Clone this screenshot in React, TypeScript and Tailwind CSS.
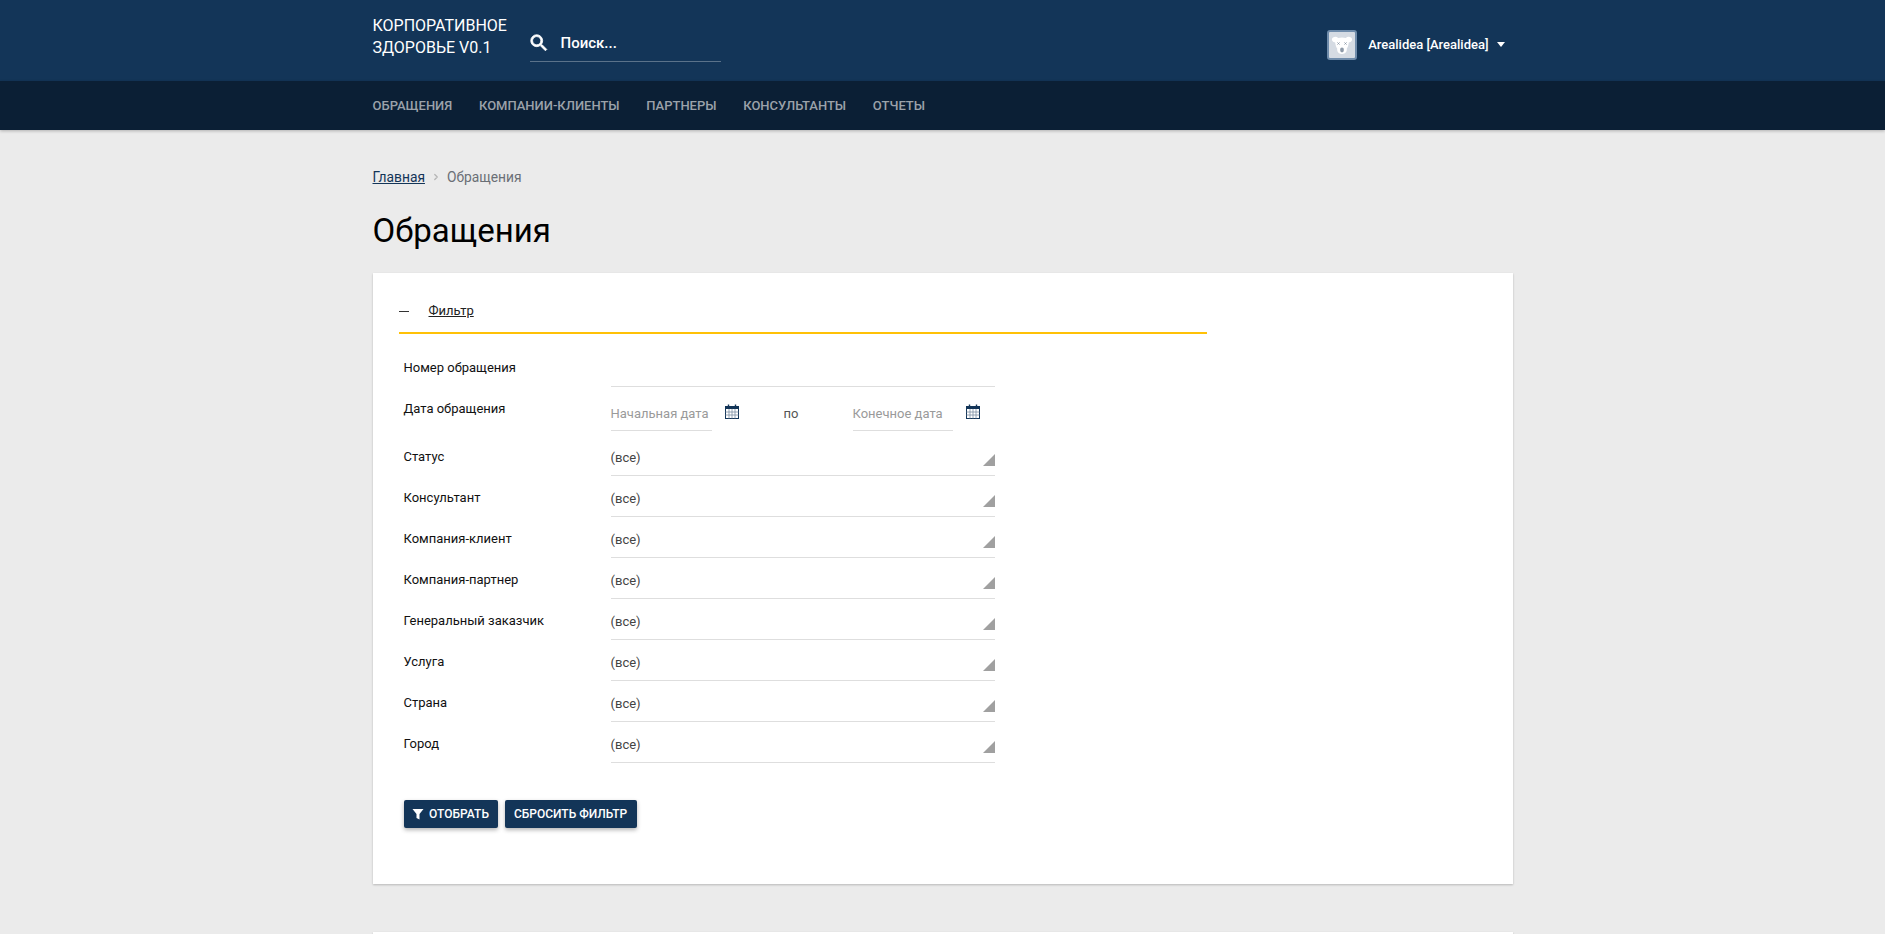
import { ChevronRight } from "lucide-react"

const navItems = ["Обращения", "Компании-клиенты", "Партнеры", "Консультанты", "Отчеты"]
const selects = ["Статус", "Консультант", "Компания-клиент", "Компания-партнер", "Генеральный заказчик", "Услуга", "Страна", "Город"]

function SearchIcon() {
  return (
    <svg viewBox="0 0 24 24" className="-ml-[2px] h-[22px] w-[22px] fill-white stroke-white stroke-[0.9]">
      <path d="M15.5 14h-.79l-.28-.27A6.471 6.471 0 0 0 16 9.5 6.5 6.5 0 1 0 9.5 16c1.61 0 3.09-.59 4.23-1.57l.27.28v.79l5 4.99L20.49 19l-4.99-5zm-6 0C7.01 14 5 11.99 5 9.5S7.01 5 9.5 5 14 7.01 14 9.5 11.99 14 9.5 14z" />
    </svg>
  )
}

function DogAvatar() {
  return (
    <div className="flex h-[30px] w-[30px] items-center justify-center rounded-[3px] border-2 border-[#6f8cab] bg-[#d5dbe3]">
      <svg viewBox="0 0 26 26" className="h-[26px] w-[26px]">
        <path
          fill="#fff"
          d="M4 5.5c1.8-1 3.8-.8 5.2.4 2.4-.7 5.2-.7 7.6 0 1.4-1.2 3.4-1.4 5.2-.4 1.2.7 1.4 2.3.6 3.5-.6.9-1.6 1.4-2.8 1.4-.2 2.4-1 4.6-2 6.2.3 3-1.1 5.4-4.8 5.4s-5.1-2.4-4.8-5.4c-1-1.6-1.8-3.8-2-6.2-1.2 0-2.2-.5-2.8-1.4-.8-1.2-.6-2.8.6-3.5z"
        />
        <path stroke="#8d99a8" strokeWidth="1" d="M8.5 10.5l2 2m0-2l-2 2M15.5 10.5l2 2m0-2l-2 2" />
        <ellipse cx="13" cy="18" rx="1.9" ry="2.4" fill="#8d99a8" />
      </svg>
    </div>
  )
}

function CalendarIcon() {
  return (
    <svg viewBox="0 0 14 15" className="h-[15px] w-[14px] shrink-0">
      <rect x="0.5" y="2.5" width="13" height="12" fill="#fff" stroke="#133558" />
      <rect x="0" y="2" width="14" height="3" fill="#133558" />
      <path stroke="#7f8fa3" strokeWidth="0.8" d="M0.5 8h13M0.5 11h13M4 5v9.5M7 5v9.5M10 5v9.5" />
      <path stroke="#133558" strokeWidth="1.4" d="M3.5 0.5v3M10.5 0.5v3" />
    </svg>
  )
}

function Corner() {
  return (
    <svg viewBox="0 0 12 12" className="h-3 w-3 fill-[#a0a0a0]">
      <path d="M12 0v12H0z" />
    </svg>
  )
}

function SelectRow({ label, tall }: { label: string; tall?: boolean }) {
  return (
    <div className={`flex ${tall ? "h-[45px]" : "h-[41px]"}`}>
      <div className="flex w-[207px] items-end pb-[12px] text-[13px] leading-[15px] text-[#111]">{label}</div>
      <div className="flex w-[384px] items-end justify-between border-b border-[#dedede] pb-[9px]">
        <span className="pb-[1px] text-[13px] leading-[15px] text-[#444]">(все)</span>
        <Corner />
      </div>
    </div>
  )
}

export default function App() {
  return (
    <div className="h-[934px] overflow-hidden bg-[#ebebeb] font-['Roboto',sans-serif]">
      <header className="bg-[#133558]">
        <div className="mx-auto flex h-[81px] w-[1140px] items-center">
          <div className="mb-[7px] w-[157px] text-[16px] font-normal leading-[22px] text-white">
            КОРПОРАТИВНОЕ
            <br />
            ЗДОРОВЬЕ V0.1
          </div>
          <div className="mt-[7px] flex h-[36px] w-[191px] items-center gap-[11px] border-b border-white/30 pb-[1px]">
            <SearchIcon />
            <span className="pt-[1px] text-[15px] font-medium text-white">Поиск...</span>
          </div>
          <div className="ml-auto mr-[8px] mt-[8px] flex items-center">
            <DogAvatar />
            <span className="ml-[11px] text-[13px] font-medium text-white">Arealidea [Arealidea]</span>
            <span className="ml-[8px] h-0 w-0 border-x-[4.5px] border-t-[5px] border-x-transparent border-t-white" />
          </div>
        </div>
      </header>
      <nav className="bg-[#0b1f35] shadow-[0_1px_3px_rgba(0,0,0,0.25)]">
        <div className="mx-auto flex h-[49px] w-[1140px] items-center gap-[26.7px]">
          {navItems.map((item) => (
            <a key={item} className="text-[13px] font-medium uppercase text-[#9ba2aa]">
              {item}
            </a>
          ))}
        </div>
      </nav>
      <main className="mx-auto w-[1140px]">
        <div className="mt-[39px] flex h-[16px] items-center text-[13.8px]">
          <a className="text-[#133558] underline">Главная</a>
          <ChevronRight className="mx-[6px] h-[10px] w-[10px] text-[#b5b5b5]" strokeWidth={3} />
          <span className="text-[#6a6f76]">Обращения</span>
        </div>
        <h1 className="mt-[24px] text-[33px] font-normal leading-[44px] text-black">Обращения</h1>
        <section className="mt-[20px] h-[611px] bg-white px-[26px] shadow-[0_1px_2px_rgba(0,0,0,0.22)]">
          <div className="flex h-[61px] w-[808px] items-end border-b-2 border-[#ffc107] pb-[20px]">
            <span className="h-px w-[10px] bg-[#333]" />
            <a className="ml-[20px] -mb-[6px] text-[13px] leading-[15px] text-[#222] underline">Фильтр</a>
          </div>
          <div className="ml-[5px]">
            <div className="flex h-[53px]">
              <div className="flex w-[207px] items-end pb-[12px] text-[13px] leading-[15px] text-[#111]">Номер обращения</div>
              <div className="w-[384px] border-b border-[#dedede]" />
            </div>
            <div className="flex h-[44px]">
              <div className="w-[207px] pt-[14px] text-[13px] leading-[15px] text-[#111]">Дата обращения</div>
              <div className="flex w-[384px] items-end">
                <div className="flex h-[34px] w-[101px] items-center border-b border-[#dedede] text-[13px] text-[#9a9a9a]">Начальная дата</div>
                <div className="mb-[12px] ml-[13px]">
                  <CalendarIcon />
                </div>
                <div className="mb-[10px] ml-[45px] w-[69px] text-[13px] leading-[15px] text-[#555]">по</div>
                <div className="flex h-[34px] w-[100px] items-center border-b border-[#dedede] text-[13px] text-[#9a9a9a]">Конечное дата</div>
                <div className="mb-[12px] ml-[13px]">
                  <CalendarIcon />
                </div>
              </div>
            </div>
            {selects.map((s, i) => (
              <SelectRow key={s} label={s} tall={i === 0} />
            ))}
            <div className="mt-[37px] flex gap-[7px]">
              <button className="flex h-[28px] w-[94px] items-center justify-center gap-[5px] rounded-[2px] bg-[#133558] text-[12px] font-medium text-white shadow-[0_2px_4px_rgba(0,0,0,0.3)]">
                <svg viewBox="0 0 12 12" className="h-[12px] w-[12px] fill-white">
                  <path d="M0.5 1h11L7.5 6v5.5l-3-1.5V6z" />
                </svg>
                ОТОБРАТЬ
              </button>
              <button className="flex h-[28px] w-[132px] items-center justify-center rounded-[2px] bg-[#133558] text-[12px] font-medium text-white shadow-[0_2px_4px_rgba(0,0,0,0.3)]">
                СБРОСИТЬ ФИЛЬТР
              </button>
            </div>
          </div>
        </section>
        <section className="mt-[48px] h-[200px] bg-white shadow-[0_1px_2px_rgba(0,0,0,0.22)]" />
      </main>
    </div>
  )
}
